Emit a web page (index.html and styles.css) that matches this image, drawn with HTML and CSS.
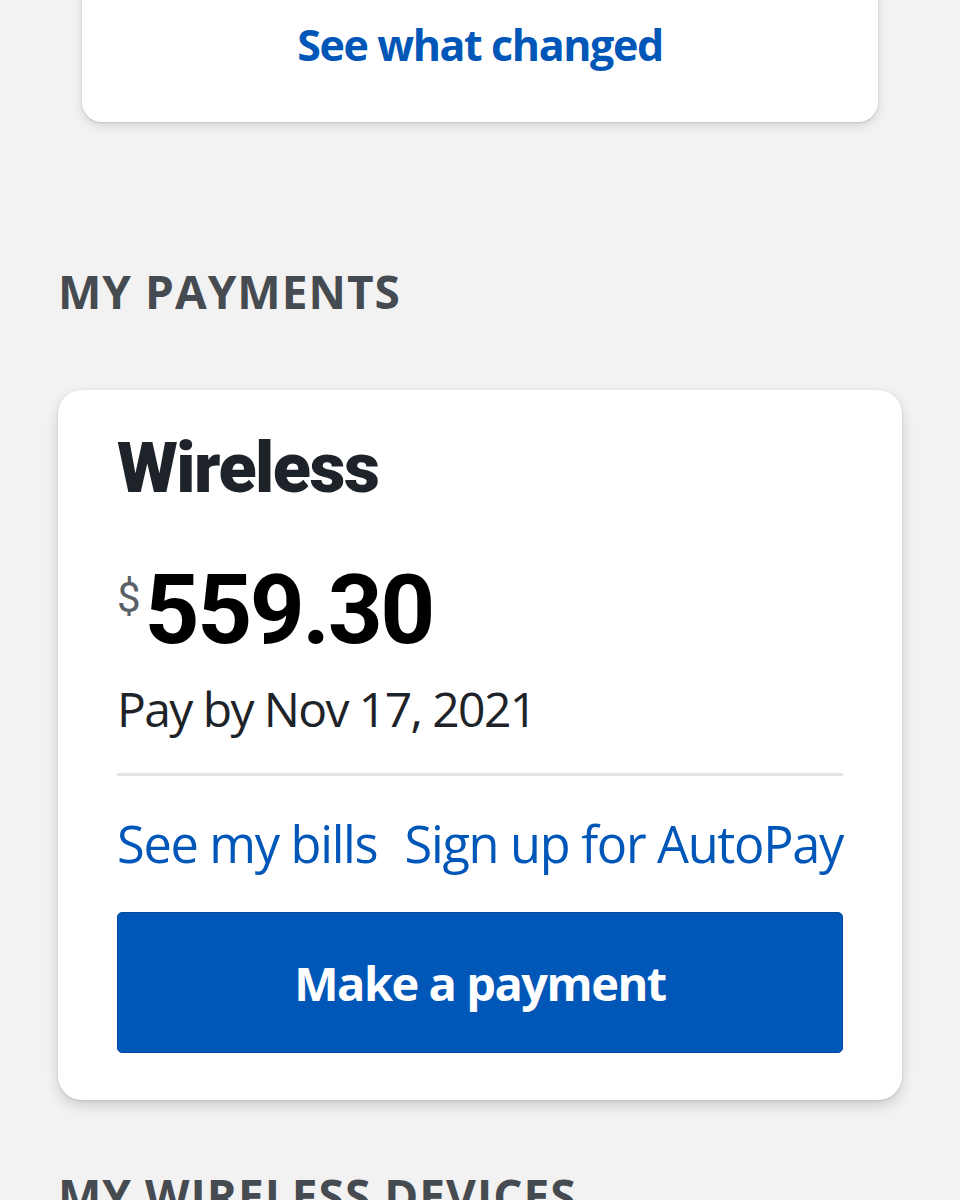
FILE: index.html
```html
<!DOCTYPE html>
<html lang="en">
<head>
    <meta charset="UTF-8">
    <meta name="viewport" content="width=device-width, initial-scale=1.0">
    <title>My Payments</title>
    <link rel="stylesheet" href="styles.css">
</head>
<body>
    <div class="page">
        <div class="notice-card">
            <a class="notice-link" href="#">See what changed</a>
        </div>

        <section class="section">
            <h2 class="section-title">MY PAYMENTS</h2>
            <div class="pay-card">
                <h3 class="pay-title">Wireless</h3>
                <div class="amount"><span class="currency">$</span><span class="amount-value">559.30</span></div>
                <div class="due-date">Pay by Nov 17, 2021</div>
                <hr class="divider">
                <div class="pay-links">
                    <a class="text-link" href="#">See my bills</a>
                    <a class="text-link" href="#">Sign up for AutoPay</a>
                </div>
                <button class="pay-button">Make a payment</button>
            </div>
        </section>

        <section class="section">
            <h2 class="section-title">MY WIRELESS DEVICES</h2>
        </section>
    </div>
</body>
</html>
```

FILE: styles.css
```css
:root {
    --bg-color: #f2f2f2; --card-bg: #ffffff; --link-color: #0057b8;
    --heading-color: #454b50; --text-color: #1d2329; --muted: #5a6066;
    --divider: #e3e3e3;
}
body { margin: 0; background-color: var(--bg-color); font-family: 'Open Sans', 'Noto Sans', sans-serif; color: var(--text-color); }
.page { display: flex; flex-direction: column; }
.notice-card { background: var(--card-bg); margin: -40px 82px 0; padding: 55px 0 47px; border-radius: 0 0 20px 20px; box-shadow: 0 4px 10px rgba(0,0,0,0.12), 0 1px 2px rgba(0,0,0,0.1); text-align: center; }
.notice-link { color: var(--link-color); font-size: 43px; line-height: 60px; font-weight: 700; text-decoration: none; letter-spacing: -1.4px; }
.section { padding: 0 58px; }
.section-title { margin: 65px 0 0; font-size: 46px; line-height: 60px; font-weight: 700; color: var(--heading-color); letter-spacing: 1px; white-space: nowrap; }
.notice-card + .section .section-title { margin-top: 139px; }
.pay-card { margin-top: 69px; background: var(--card-bg); border-radius: 24px; padding: 36px 59px 47px; box-shadow: 0 6px 14px rgba(0,0,0,0.14), 0 1px 3px rgba(0,0,0,0.12); }
.pay-title { margin: 0; font-family: Roboto, 'Open Sans', sans-serif; font-size: 70px; line-height: 84px; font-weight: 900; letter-spacing: -1.5px; }
.amount { display: flex; align-items: flex-start; margin-top: 50px; }
.currency { font-family: Roboto, sans-serif; font-size: 42px; line-height: 60px; color: var(--muted); margin-right: 4px; margin-top: 8px; }
.amount-value { font-family: Roboto, sans-serif; font-size: 96px; line-height: 100px; font-weight: 700; color: #000; letter-spacing: -2.5px; }
.due-date { margin-top: 17px; font-size: 48px; line-height: 64px; letter-spacing: -1.6px; }
.divider { border: 0; height: 3px; background: var(--divider); margin: 32px 0 0; }
.pay-links { display: flex; justify-content: space-between; margin-top: 36px; white-space: nowrap; }
.text-link { flex-shrink: 0; color: var(--link-color); font-size: 50.5px; line-height: 64px; text-decoration: none; letter-spacing: -1.3px; }
.pay-button { display: block; width: 100%; margin-top: 36px; height: 141px; background: var(--link-color); border: 1px solid #004a9e; border-radius: 5px; color: #fff; font-family: 'Open Sans', sans-serif; font-size: 47px; font-weight: 700; letter-spacing: -1.5px; }
```
